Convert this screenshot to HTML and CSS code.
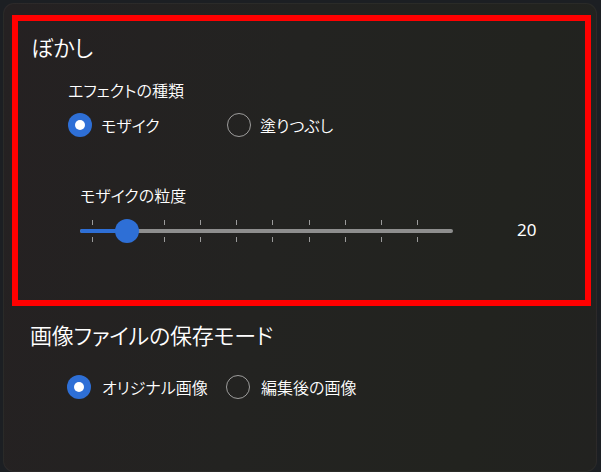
FILE: index.html
```html
<!DOCTYPE html>
<html lang="ja">
<head>
<meta charset="utf-8">
<title>ぼかし設定</title>
<link rel="stylesheet" href="styles.css">
</head>
<body>
<div class="panel">
  <section class="blur">
    <h2 class="section-title">ぼかし</h2>
    <div class="group">
      <div class="group-header">エフェクトの種類</div>
      <div class="radios">
        <label class="radio checked"><span class="circle"></span><span class="label">モザイク</span></label>
        <label class="radio"><span class="circle"></span><span class="label">塗りつぶし</span></label>
      </div>
    </div>
    <div class="granularity">
      <div class="group-header">モザイクの粒度</div>
      <div class="slider-row">
        <div class="slider">
          <div class="ticks"><i></i><i></i><i></i><i></i><i></i><i></i><i></i><i></i><i></i><i></i></div>
          <div class="track"><div class="fill"></div></div>
          <div class="ticks"><i></i><i></i><i></i><i></i><i></i><i></i><i></i><i></i><i></i><i></i></div>
          <div class="thumb"></div>
        </div>
        <div class="value">20</div>
      </div>
    </div>
  </section>
  <section class="save">
    <h2 class="section-title">画像ファイルの保存モード</h2>
    <div class="radios save-radios">
      <label class="radio checked"><span class="circle"></span><span class="label">オリジナル画像</span></label>
      <label class="radio"><span class="circle"></span><span class="label">編集後の画像</span></label>
    </div>
  </section>
</div>
</body>
</html>
```

FILE: styles.css
```css
html, body {
  margin: 0;
  padding: 0;
}
body {
  width: 601px;
  height: 472px;
  overflow: hidden;
  background: #1c1f23;
  font-family: "Noto Sans CJK JP", "Noto Sans", sans-serif;
  font-feature-settings: "palt";
  font-weight: 350;
  color: #ffffff;
}
.panel {
  margin: 3px;
  width: 594px;
  height: 469px;
  box-sizing: border-box;
  border-radius: 11px;
  border: 1px solid rgba(255, 255, 255, 0.04);
  background: linear-gradient(100deg, #252122 0%, #232321 45%, #22231f 80%, #222220 100%);
  padding: 11px 5px 0 8px;
}
.blur {
  border: 6px solid #ff0000;
  height: 291px;
  box-sizing: border-box;
  padding: 9px 0 0 13px;
}
.section-title {
  margin: 0;
  font-size: 22px;
  font-weight: 350;
  letter-spacing: -0.2px;
  line-height: 32px;
  height: 32px;
}
.group {
  margin: 16px 0 0 37px;
}
.group-header {
  font-size: 16px;
  line-height: 24px;
  height: 24px;
}
.radios {
  margin-top: 7px;
  display: grid;
  grid-template-columns: 159px auto;
  height: 32px;
}
.radio {
  display: flex;
  align-items: center;
  gap: 9px;
  font-size: 16px;
  line-height: 32px;
}
.circle {
  width: 24px;
  height: 24px;
  box-sizing: border-box;
  border-radius: 50%;
  border: 1.5px solid rgba(255, 255, 255, 0.55);
  display: flex;
  align-items: center;
  justify-content: center;
}
.radio.checked .circle {
  border: none;
  background: #2e6fd6;
}
.radio.checked .circle::after {
  content: "";
  width: 10px;
  height: 10px;
  border-radius: 50%;
  background: #ffffff;
}
.granularity {
  margin: 42px 0 0 49px;
}
.slider-row {
  margin-top: 8px;
  display: flex;
  align-items: center;
  gap: 64px;
  height: 32px;
}
.slider {
  position: relative;
  width: 373px;
  height: 32px;
  box-sizing: border-box;
  padding-top: 5px;
  display: flex;
  flex-direction: column;
  gap: 4px;
}
.ticks {
  display: flex;
  gap: 35.1px;
  padding-left: 12px;
  height: 5px;
}
.ticks i {
  width: 1px;
  height: 5px;
  background: #9a9a9a;
}
.track {
  height: 4px;
  border-radius: 2px;
  background: #8e8e8e;
}
.fill {
  width: 47px;
  height: 4px;
  border-radius: 2px;
  background: #2e6fd6;
}
.thumb {
  position: absolute;
  left: 35px;
  top: 4px;
  width: 24px;
  height: 24px;
  border-radius: 50%;
  background: #2e6fd6;
}
.value {
  font-family: "Noto Sans", sans-serif;
  font-weight: 400;
  font-size: 17px;
  line-height: 24px;
  margin-top: -3px;
}
.save {
  margin: 12px 0 0 18px;
}
.save-radios {
  margin: 21px 0 0 37px;
}
.save-radios .radio {
  gap: 11px;
}
```
